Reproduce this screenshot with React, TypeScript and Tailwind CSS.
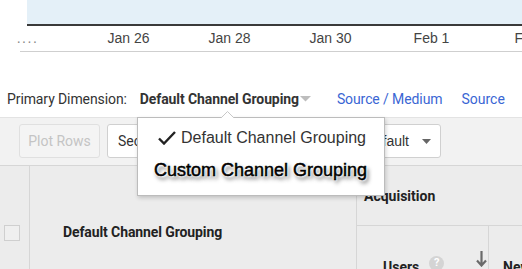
export default function App() {
  const labels = ["Jan 26", "Jan 28", "Jan 30", "Feb 1", "Feb 3"];
  return (
    <div className="relative w-[522px] h-[269px] overflow-hidden bg-white font-['Roboto',sans-serif]">
      {/* chart */}
      <div className="ml-[27px] h-[24px] bg-[#e4f0f8]" />
      <div className="ml-[27px] h-[2px] bg-[#3a3a3a]" />
      <div className="flex h-[25px] items-center ml-[-23px] font-['Liberation_Sans',Arial,sans-serif] text-[14px] text-[#444] whitespace-nowrap">
        <div className="w-[101px] shrink-0 text-center text-[#888] tracking-[1.5px]">....</div>
        {labels.map((l) => (
          <div key={l} className="w-[101px] shrink-0 text-center">
            {l}
          </div>
        ))}
      </div>
      <div className="ml-[20px] h-px bg-[#cfcfcf]" />

      {/* primary dimension */}
      <div className="h-[65px] pt-[38px] flex items-start text-[14px] leading-[18px] whitespace-nowrap">
        <span className="ml-[7px] text-[#333] tracking-[-0.1px]">Primary Dimension:</span>
        <span className="ml-[13px] font-bold text-[#333] tracking-[-0.1px]">Default Channel Grouping</span>
        <svg className="ml-[1px] mt-[6px]" width="11" height="6" viewBox="0 0 11 6">
          <path d="M0 0 L11 0 L5.5 5.5 Z" fill="#bdbdbd" />
        </svg>
        <span className="ml-[26px] text-[#3a66d4] tracking-[-0.1px]">Source / Medium</span>
        <span className="ml-[19px] text-[#3a66d4]">Source</span>
      </div>

      {/* toolbar */}
      <div className="h-[48px] border-t border-[#e3e3e3] bg-[#f2f2f2] flex items-start pt-[6px] text-[14px] whitespace-nowrap">
        <div className="ml-[19px] w-[81px] h-[34px] rounded-[3px] border border-[#e0e0e0] bg-[#f4f4f4] text-[#c4c4c4] flex items-center justify-center">
          Plot Rows
        </div>
        <div className="ml-[7px] w-[150px] h-[34px] rounded-[3px] border border-[#d0d0d0] bg-white text-[#333] flex items-center pl-[10px]">
          Secondary dimension
        </div>
        <div className="ml-[8px] w-[176px] h-[34px] rounded-[3px] border border-[#d0d0d0] bg-white text-[#333] flex items-center justify-end pr-[9px] font-['Liberation_Sans',Arial,sans-serif]">
          <span>Sort Type: Default</span>
          <svg className="ml-[13px]" width="9" height="5" viewBox="0 0 9 5">
            <path d="M0 0 L9 0 L4.5 5 Z" fill="#666" />
          </svg>
        </div>
      </div>

      {/* table header */}
      <div className="flex h-[134px] border-t border-[#d6d6d6] bg-[#ececec] text-[14px] text-[#222] whitespace-nowrap">
        <div className="w-[30px] shrink-0 border-r border-[#d6d6d6] flex items-center pl-[4px]">
          <div className="w-[16px] h-[16px] border border-[#cfcfcf] bg-[#efefef]" />
        </div>
        <div className="w-[327px] shrink-0 border-r border-[#d6d6d6] flex items-center pl-[33px] font-bold tracking-[-0.1px]">
          Default Channel Grouping
        </div>
        <div className="flex-1 flex flex-col">
          <div className="h-[60px] border-b border-[#d6d6d6] flex items-center pl-[7px] pt-[1px] font-bold">
            Acquisition
          </div>
          <div className="flex flex-1">
            <div className="w-[132px] shrink-0 border-r border-[#d6d6d6] flex items-start pt-[31px] pl-[26px]">
              <span className="font-bold">Users</span>
              <div className="ml-[10px] mt-[-1px] w-[15px] h-[15px] rounded-full bg-[#d4d4d4] text-white text-[11px] font-bold flex items-center justify-center">
                ?
              </div>
              <svg className="ml-[32px] mt-[-6px]" width="11" height="16" viewBox="0 0 11 16">
                <path d="M5.5 0 V14 M1 9.5 L5.5 14.5 L10 9.5" stroke="#6a6a6a" strokeWidth="2.2" fill="none" />
              </svg>
            </div>
            <div className="pl-[14px] pt-[31px] font-bold">New Users</div>
          </div>
        </div>
      </div>

      {/* dropdown popup */}
      <div className="absolute left-[137px] top-[117px] w-[248px] h-[79px] bg-white border border-[#bcbcbc] shadow-[1px_2px_4px_rgba(0,0,0,0.18)] font-['Liberation_Sans',Arial,sans-serif] whitespace-nowrap">
        <svg className="absolute left-[83px] top-[-7px]" width="13" height="7" viewBox="0 0 13 7">
          <path d="M0 7 L6.5 0.5 L13 7" fill="white" stroke="#c8c8c8" strokeWidth="1" />
        </svg>
        <div className="flex items-center h-[20px] mt-[10px] pl-[20px] text-[16px] text-[#333]">
          <svg width="18" height="14" viewBox="0 0 18 14">
            <path d="M1 7.5 L6 12.5 L17 1" stroke="#222" strokeWidth="2.4" fill="none" />
          </svg>
          <span className="ml-[5px]">Default Channel Grouping</span>
        </div>
        <div className="mt-[12px] pl-[16px] text-[18px] leading-[20px] text-black [-webkit-text-stroke:0.5px_#000] [text-shadow:0_0_1px_#fff,0_0_2px_#fff,1px_1px_2px_#fff,-1px_-1px_2px_#fff,2px_3px_4px_rgba(0,0,0,0.75)]">
          Custom Channel Grouping
        </div>
      </div>
    </div>
  );
}
